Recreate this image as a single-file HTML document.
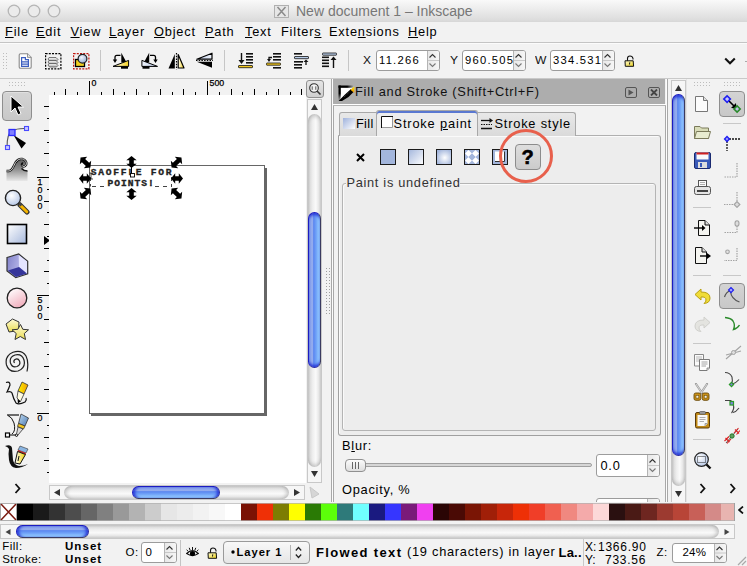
<!DOCTYPE html><html><head><meta charset="utf-8"><style>
html,body{margin:0;padding:0;}
body{width:747px;height:566px;position:relative;overflow:hidden;background:#f2f2f2;font-family:"Liberation Sans",sans-serif;}
.t{position:absolute;white-space:nowrap;line-height:1;}
div{box-sizing:border-box;}
u{text-decoration:underline;text-underline-offset:1px;}
</style></head><body>
<div style="position:absolute;left:0px;top:0px;width:747px;height:21px;background:linear-gradient(#f9f9f9,#e0e0e0 85%,#dadada);"></div>
<div style="position:absolute;left:0px;top:21px;width:747px;height:1px;background:#d8d8d8;"></div>
<svg style="position:absolute;left:7px;top:4px;" width="14" height="14" viewBox="0 0 14 14"><circle cx="7" cy="7" r="5.8" fill="#ebebeb" stroke="#b5b5b5" stroke-width="1.3"/></svg>
<svg style="position:absolute;left:27px;top:4px;" width="14" height="14" viewBox="0 0 14 14"><circle cx="7" cy="7" r="5.8" fill="#ebebeb" stroke="#b5b5b5" stroke-width="1.3"/></svg>
<svg style="position:absolute;left:47px;top:4px;" width="14" height="14" viewBox="0 0 14 14"><circle cx="7" cy="7" r="5.8" fill="#ebebeb" stroke="#b5b5b5" stroke-width="1.3"/></svg>
<svg style="position:absolute;left:274px;top:5px;" width="15" height="13" viewBox="0 0 15 13"><rect x="0.5" y="0.5" width="14" height="12" fill="#e6e6e6" stroke="#b0b0b0"/><path d="M3.5 2 L11.5 11 M11.5 2 L3.5 11" stroke="#8a8a8a" stroke-width="1.5"/></svg>
<div class="t" style="left:296px;top:4px;font-size:14px;color:#777;font-weight:400;">New document 1 – Inkscape</div>
<div style="position:absolute;left:0px;top:22px;width:747px;height:20px;background:#f2f2f2;"></div>
<div style="position:absolute;left:0px;top:42px;width:747px;height:1px;background:#c4c4c4;"></div>
<div style="position:absolute;left:0px;top:43px;width:747px;height:1px;background:#fbfbfb;"></div>
<div class="t" style="left:5px;top:25.9px;font-size:12.8px;color:#000;font-weight:400;letter-spacing:0.8px"><u>F</u>ile</div>
<div class="t" style="left:36px;top:25.9px;font-size:12.8px;color:#000;font-weight:400;letter-spacing:0.8px"><u>E</u>dit</div>
<div class="t" style="left:70.5px;top:25.9px;font-size:12.8px;color:#000;font-weight:400;letter-spacing:0.8px"><u>V</u>iew</div>
<div class="t" style="left:109px;top:25.9px;font-size:12.8px;color:#000;font-weight:400;letter-spacing:0.8px"><u>L</u>ayer</div>
<div class="t" style="left:154px;top:25.9px;font-size:12.8px;color:#000;font-weight:400;letter-spacing:0.8px"><u>O</u>bject</div>
<div class="t" style="left:205px;top:25.9px;font-size:12.8px;color:#000;font-weight:400;letter-spacing:0.8px"><u>P</u>ath</div>
<div class="t" style="left:245px;top:25.9px;font-size:12.8px;color:#000;font-weight:400;letter-spacing:0.8px"><u>T</u>ext</div>
<div class="t" style="left:281px;top:25.9px;font-size:12.8px;color:#000;font-weight:400;letter-spacing:0.8px">Filter<u>s</u></div>
<div class="t" style="left:329px;top:25.9px;font-size:12.8px;color:#000;font-weight:400;letter-spacing:0.8px">Exte<u>n</u>sions</div>
<div class="t" style="left:408px;top:25.9px;font-size:12.8px;color:#000;font-weight:400;letter-spacing:0.8px"><u>H</u>elp</div>
<div style="position:absolute;left:0px;top:44px;width:747px;height:34px;background:#f2f2f2;"></div>
<div style="position:absolute;left:0px;top:78px;width:747px;height:1px;background:#c9c9c9;"></div>
<svg style="position:absolute;left:3px;top:53px;" width="6" height="18" viewBox="0 0 6 18"><rect x="0" y="0" width="1" height="1" fill="#bdbdbd"/><rect x="0" y="3" width="1" height="1" fill="#bdbdbd"/><rect x="0" y="6" width="1" height="1" fill="#bdbdbd"/><rect x="0" y="9" width="1" height="1" fill="#bdbdbd"/><rect x="0" y="12" width="1" height="1" fill="#bdbdbd"/><rect x="0" y="15" width="1" height="1" fill="#bdbdbd"/><rect x="3" y="0" width="1" height="1" fill="#bdbdbd"/><rect x="3" y="3" width="1" height="1" fill="#bdbdbd"/><rect x="3" y="6" width="1" height="1" fill="#bdbdbd"/><rect x="3" y="9" width="1" height="1" fill="#bdbdbd"/><rect x="3" y="12" width="1" height="1" fill="#bdbdbd"/><rect x="3" y="15" width="1" height="1" fill="#bdbdbd"/></svg>
<svg style="position:absolute;left:18px;top:53px;" width="14" height="16" viewBox="0 0 14 16"><path d="M1.2 2 Q1.2 0.7 2.5 0.7 H9.5 L13.2 4.4 V14 Q13.2 15.3 11.9 15.3 H2.5 Q1.2 15.3 1.2 14 Z" fill="#fdfdfd" stroke="#8a8a8a" stroke-width="1.1"/><path d="M9.5 0.7 V4.4 H13.2" fill="#e6e6e6" stroke="#8a8a8a" stroke-width="0.9"/><path d="M3.6 4.6 H7.4 V6.6 H10.4 V13.4 H3.6 Z" fill="#fff" stroke="#3d5fc0" stroke-width="1.2"/><path d="M3.6 8.9 H10.4 M3.6 11.2 H10.4" stroke="#3d5fc0" stroke-width="1.2"/></svg>
<svg style="position:absolute;left:45px;top:53px;" width="17" height="17" viewBox="0 0 17 17"><defs><linearGradient id="lyr" x1="0" y1="0" x2="0" y2="1"><stop offset="0" stop-color="#fafafa"/><stop offset="1" stop-color="#aaa"/></linearGradient></defs><rect x="0.6" y="0.6" width="15.3" height="15.3" fill="none" stroke="#000" stroke-width="1.2" stroke-dasharray="2,1.2"/><path d="M4 4.5 H11 L13 6.5 L11.5 8 H4.5 L3 6Z" fill="url(#lyr)" stroke="#555" stroke-width="0.8"/><path d="M4 7.5 H11 L13 9.5 L11.5 11 H4.5 L3 9Z" fill="url(#lyr)" stroke="#555" stroke-width="0.8"/><path d="M4 10.5 H11 L13 12.5 L11.5 14 H4.5 L3 12Z" fill="url(#lyr)" stroke="#555" stroke-width="0.8"/></svg>
<svg style="position:absolute;left:73px;top:53px;" width="17" height="17" viewBox="0 0 17 17"><defs><radialGradient id="mg" cx="0.4" cy="0.35" r="0.7"><stop offset="0" stop-color="#f4f8ff"/><stop offset="1" stop-color="#90a8d0"/></radialGradient></defs><rect x="0.6" y="0.6" width="15.3" height="15.3" fill="none" stroke="#c01810" stroke-width="1.2" stroke-dasharray="2,1.2"/><rect x="2.5" y="6.5" width="9" height="7" fill="#f2d020" stroke="#000" stroke-width="1.3"/><circle cx="9.5" cy="5.8" r="4.4" fill="url(#mg)" stroke="#222" stroke-width="1.2"/></svg>
<div style="position:absolute;left:100px;top:50px;width:1px;height:21px;background:#c6c6c6;"></div>
<svg style="position:absolute;left:112px;top:52px;" width="19" height="18" viewBox="0 0 19 18"><defs><linearGradient id="yw" x1="0" y1="0" x2="1" y2="0"><stop offset="0" stop-color="#fffef0"/><stop offset="1" stop-color="#f4d020"/></linearGradient><linearGradient id="bw" x1="0" y1="0" x2="1" y2="0"><stop offset="0" stop-color="#b8c8e8"/><stop offset="1" stop-color="#eef2fa"/></linearGradient></defs><path d="M9.3 0.8 L14.2 9.8 L9.3 10.5 Z" fill="#000"/><path d="M8.5 3.3 H4.8 Q3 3.3 3 5.2 V8" fill="none" stroke="#000" stroke-width="1.3"/><path d="M0.8 7.6 L3 11 L5.2 7.6 Z" fill="#000"/><path d="M1 14.4 L16.6 8.4 V14.4 Z" fill="url(#yw)" stroke="#000" stroke-width="1" stroke-linejoin="round"/><rect x="9" y="14.4" width="7" height="2.3" fill="#000"/></svg>
<svg style="position:absolute;left:140px;top:52px;" width="19" height="18" viewBox="0 0 19 18"><g transform="translate(18.5 0) scale(-1 1)"><path d="M9.3 0.8 L14.2 9.8 L9.3 10.5 Z" fill="#000"/><path d="M8.5 3.3 H4.8 Q3 3.3 3 5.2 V8" fill="none" stroke="#000" stroke-width="1.3"/><path d="M0.8 7.6 L3 11 L5.2 7.6 Z" fill="#000"/><path d="M1 14.4 L16.6 8.4 V14.4 Z" fill="url(#bw)" stroke="#000" stroke-width="1" stroke-linejoin="round"/><rect x="9" y="14.4" width="7" height="2.3" fill="#000"/></g></svg>
<svg style="position:absolute;left:168px;top:52px;" width="17" height="18" viewBox="0 0 17 18"><path d="M6.8 2 L0.5 16.5 H6.8 Z" fill="#000"/><path d="M10.2 2.5 L16 16 H10.2 Z" fill="url(#yw)" stroke="#000" stroke-width="1.2" stroke-linejoin="round"/><path d="M8.5 1 V17.5" stroke="#000" stroke-width="1.2" stroke-dasharray="1.5,1.2"/></svg>
<svg style="position:absolute;left:196px;top:52px;" width="17" height="17" viewBox="0 0 17 17"><path d="M16 1.2 L0.8 7.2 H16 Z" fill="url(#bw)" stroke="#000" stroke-width="1.2" stroke-linejoin="round"/><path d="M16 15.8 L0.8 9.8 H16 Z" fill="#000"/><path d="M0 8.5 H17" stroke="#000" stroke-width="1.2" stroke-dasharray="1.5,1.2"/></svg>
<div style="position:absolute;left:224px;top:50px;width:1px;height:21px;background:#c6c6c6;"></div>
<svg style="position:absolute;left:237px;top:52px;" width="17" height="17" viewBox="0 0 17 17"><rect x="9" y="1" width="7" height="1.6" fill="#111"/><rect x="9" y="4" width="7" height="1.6" fill="#111"/><rect x="9" y="7" width="7" height="1.6" fill="#111"/><rect x="9" y="10" width="7" height="1.6" fill="#111"/><path d="M4.5 1 V10" stroke="#111" stroke-width="1.4"/><path d="M1.5 8 L4.5 12 L7.5 8Z" fill="#111"/><rect x="1.5" y="13.5" width="14" height="2.2" rx="0.5" fill="#f2c81e" stroke="#111" stroke-width="0.8"/></svg>
<svg style="position:absolute;left:265px;top:52px;" width="17" height="17" viewBox="0 0 17 17"><rect x="8" y="1" width="8" height="1.6" fill="#111"/><rect x="8" y="4" width="8" height="1.6" fill="#111"/><rect x="8" y="7" width="8" height="1.6" fill="#111"/><rect x="8" y="15" width="8" height="1.6" fill="#111"/><path d="M7 5.5 H4 V8" fill="none" stroke="#111" stroke-width="1.3"/><path d="M2 7 L4 10 L6 7Z" fill="#111"/><rect x="1.5" y="11" width="14" height="2.2" rx="0.5" fill="#f2c81e" stroke="#111" stroke-width="0.8"/></svg>
<svg style="position:absolute;left:293px;top:52px;" width="17" height="17" viewBox="0 0 17 17"><rect x="1" y="1" width="8" height="1.6" fill="#111"/><rect x="1" y="12" width="8" height="1.6" fill="#111"/><rect x="1" y="15" width="8" height="1.6" fill="#111"/><rect x="1" y="9" width="9" height="1.6" fill="#111"/><rect x="1.5" y="4.5" width="14" height="2.2" rx="0.5" fill="#b8cce8" stroke="#111" stroke-width="0.8"/><path d="M13 9 V13" stroke="#111" stroke-width="1.3"/><path d="M10.5 10 L13 7.5 L15.5 10Z" fill="#111"/></svg>
<svg style="position:absolute;left:321px;top:52px;" width="17" height="17" viewBox="0 0 17 17"><rect x="1.5" y="1" width="14" height="2.2" rx="0.5" fill="#b8cce8" stroke="#111" stroke-width="0.8"/><rect x="1" y="4.5" width="7" height="1.6" fill="#111"/><rect x="1" y="7.5" width="7" height="1.6" fill="#111"/><rect x="1" y="10.5" width="7" height="1.6" fill="#111"/><rect x="1" y="13.5" width="7" height="1.6" fill="#111"/><path d="M12.5 6 V16" stroke="#111" stroke-width="1.4"/><path d="M9.5 8 L12.5 4.5 L15.5 8Z" fill="#111"/></svg>
<div style="position:absolute;left:348px;top:50px;width:1px;height:21px;background:#c6c6c6;"></div>
<div class="t" style="left:362.5px;top:54.5px;font-size:11.5px;color:#111;font-weight:400;transform:scaleX(1.05);transform-origin:left">X</div>
<div style="position:absolute;left:376px;top:50px;width:64px;height:21px;border:1px solid #9c9c9c;border-radius:3px;background:#fff;overflow:hidden"><div style="position:absolute;right:0;top:0;width:12px;height:100%;background:linear-gradient(90deg,#e8e8e8,#f6f6f6);border-left:1px solid #b4b4b4"></div><svg style="position:absolute;right:0;top:0" width="12" height="19" viewBox="0 0 12 19"><path d="M2.5 6.5 L5.5 3.5 L8.5 6.5" fill="none" stroke="#333" stroke-width="1.1"/><path d="M2.5 12.5 L5.5 15.5 L8.5 12.5" fill="none" stroke="#777" stroke-width="1.1"/><path d="M1 9.5 H12" stroke="#c8c8c8"/></svg></div>
<div class="t" style="left:379px;top:54.5px;font-size:11.2px;color:#000;font-weight:400;letter-spacing:1.25px">11.266</div>
<div class="t" style="left:449.5px;top:54.5px;font-size:11.5px;color:#111;font-weight:400;transform:scaleX(1.05);transform-origin:left">Y</div>
<div style="position:absolute;left:462px;top:50px;width:64px;height:21px;border:1px solid #9c9c9c;border-radius:3px;background:#fff;overflow:hidden"><div style="position:absolute;right:0;top:0;width:12px;height:100%;background:linear-gradient(90deg,#e8e8e8,#f6f6f6);border-left:1px solid #b4b4b4"></div><svg style="position:absolute;right:0;top:0" width="12" height="19" viewBox="0 0 12 19"><path d="M2.5 6.5 L5.5 3.5 L8.5 6.5" fill="none" stroke="#333" stroke-width="1.1"/><path d="M2.5 12.5 L5.5 15.5 L8.5 12.5" fill="none" stroke="#777" stroke-width="1.1"/><path d="M1 9.5 H12" stroke="#c8c8c8"/></svg></div>
<div class="t" style="left:465px;top:54.5px;font-size:11.2px;color:#000;font-weight:400;letter-spacing:1.25px">960.505</div>
<div class="t" style="left:535px;top:54.5px;font-size:11.5px;color:#111;font-weight:400;transform:scaleX(1.05);transform-origin:left">W</div>
<div style="position:absolute;left:550px;top:50px;width:65px;height:21px;border:1px solid #9c9c9c;border-radius:3px;background:#fff;overflow:hidden"><div style="position:absolute;right:0;top:0;width:12px;height:100%;background:linear-gradient(90deg,#e8e8e8,#f6f6f6);border-left:1px solid #b4b4b4"></div><svg style="position:absolute;right:0;top:0" width="12" height="19" viewBox="0 0 12 19"><path d="M2.5 6.5 L5.5 3.5 L8.5 6.5" fill="none" stroke="#333" stroke-width="1.1"/><path d="M2.5 12.5 L5.5 15.5 L8.5 12.5" fill="none" stroke="#777" stroke-width="1.1"/><path d="M1 9.5 H12" stroke="#c8c8c8"/></svg></div>
<div class="t" style="left:553px;top:54.5px;font-size:11.2px;color:#000;font-weight:400;letter-spacing:1.25px">334.531</div>
<svg style="position:absolute;left:624px;top:55px;" width="11" height="12" viewBox="0 0 11 12"><defs><linearGradient id="lk2" x1="0" y1="0" x2="1" y2="1"><stop offset="0" stop-color="#fffbd0"/><stop offset="1" stop-color="#e8d020"/></linearGradient></defs><path d="M3.5 6 V3.5 Q3.5 1 6 1 Q8.5 1 9 3.5 V4.5" fill="none" stroke="#111" stroke-width="1.1"/><path d="M1 5.8 H9.2 L9.6 11.3 H1.3 Z" fill="url(#lk2)" stroke="#111" stroke-width="1"/><path d="M5 7.5 L6.3 7.5 L5.9 9.8 L5.3 9.8 Z" fill="#111"/></svg>
<svg style="position:absolute;left:724px;top:57px;" width="12" height="8" viewBox="0 0 12 8"><path d="M1.2 1.5 L6 6.2 L10.8 1.5" fill="none" stroke="#111" stroke-width="2.1"/></svg>
<div style="position:absolute;left:745px;top:61px;width:2px;height:1px;background:#aaa;"></div>
<svg style="position:absolute;left:9px;top:82px;" width="18" height="6" viewBox="0 0 18 6"><rect x="0" y="0" width="1" height="1" fill="#bdbdbd"/><rect x="0" y="3" width="1" height="1" fill="#bdbdbd"/><rect x="3" y="0" width="1" height="1" fill="#bdbdbd"/><rect x="3" y="3" width="1" height="1" fill="#bdbdbd"/><rect x="6" y="0" width="1" height="1" fill="#bdbdbd"/><rect x="6" y="3" width="1" height="1" fill="#bdbdbd"/><rect x="9" y="0" width="1" height="1" fill="#bdbdbd"/><rect x="9" y="3" width="1" height="1" fill="#bdbdbd"/><rect x="12" y="0" width="1" height="1" fill="#bdbdbd"/><rect x="12" y="3" width="1" height="1" fill="#bdbdbd"/><rect x="15" y="0" width="1" height="1" fill="#bdbdbd"/><rect x="15" y="3" width="1" height="1" fill="#bdbdbd"/></svg>
<div style="position:absolute;left:2px;top:91px;width:30px;height:30px;border:1px solid #8e8e8e;border-radius:4px;background:linear-gradient(#d4d4d4,#c8c8c8);box-shadow:inset 0 1px 0 #e0e0e0;"></div>
<svg style="position:absolute;left:9px;top:95px;" width="16" height="22" viewBox="0 0 16 22"><path d="M2 1 V17 L6 13 L9 20 L12 18.5 L9 12 L14.5 12 Z" fill="#000" stroke="#fff" stroke-width="1" stroke-linejoin="round"/></svg>
<svg style="position:absolute;left:4px;top:125px;" width="26" height="26" viewBox="0 0 26 26"><path d="M3 22.5 Q3 8 8 6 Q13 3 22.5 3.5" fill="none" stroke="#555" stroke-width="1.1"/><path d="M9.5 10 L17.5 23.5 L22 18Z" fill="#000"/><rect x="5" y="4.5" width="6" height="6" fill="#8080ff" stroke="#2a2aff" stroke-width="1.3"/><rect x="20.5" y="1.5" width="4" height="4" fill="#c8c8ff" stroke="#4a4aff" stroke-width="1.1"/><rect x="1.5" y="20.5" width="4" height="4" fill="#c8c8ff" stroke="#4a4aff" stroke-width="1.1"/></svg>
<svg style="position:absolute;left:6px;top:157px;" width="23" height="25" viewBox="0 0 23 25"><defs><linearGradient id="tw" x1="0" y1="0" x2="0" y2="1"><stop offset="0" stop-color="#5a5a5a"/><stop offset="0.45" stop-color="#8c8c8c"/><stop offset="1" stop-color="#e8e8e8"/></linearGradient></defs><path d="M0.5 14 H3 C6.5 13.5 7.5 9 9.5 5.5 C11.5 2.5 14 1.5 16.5 2 C19.5 2.8 21 5.5 20 8 C19 10 16.5 10 16 8.3 C15.6 7 16.3 6.3 17 6.6 L17 11 C18 13 19.5 14 21.5 14 V24 H0.5 Z" fill="url(#tw)"/><path d="M0.5 14 H3 C6.5 13.5 7.5 9 9.5 5.5 C11.5 2.5 14 1.5 16.5 2 C19.5 2.8 21 5.5 20 8 C19 10 16.5 10 16 8.3 C15.6 7 16.3 6.3 17 6.6" fill="none" stroke="#111" stroke-width="2.3"/><path d="M0.5 14 H3 C6.5 13.5 7.5 9 9.5 5.5 C11.5 2.5 14 1.5 16.5 2 C19.5 2.8 21 5.5 20 8 C19 10 16.5 10 16 8.3" fill="none" stroke="#fff" stroke-width="0.8"/><path d="M15.5 11.5 C17 13.2 19 14 21.5 14" fill="none" stroke="#111" stroke-width="1.3"/></svg>
<svg style="position:absolute;left:3px;top:188px;" width="27" height="27" viewBox="0 0 27 27"><defs><radialGradient id="zg" cx="0.4" cy="0.35" r="0.7"><stop offset="0" stop-color="#ffffff"/><stop offset="1" stop-color="#b4c6e6"/></radialGradient></defs><path d="M17 17 L24 24" stroke="#333" stroke-width="5" stroke-linecap="round"/><path d="M17.5 17.5 L23.8 23.8" stroke="#f4b400" stroke-width="3" stroke-linecap="round"/><path d="M16 15 L18.5 17.5" stroke="#444" stroke-width="3"/><circle cx="10" cy="10" r="7.6" fill="url(#zg)" stroke="#222" stroke-width="1.4"/></svg>
<svg style="position:absolute;left:6px;top:223px;" width="22" height="22" viewBox="0 0 22 22"><defs><linearGradient id="rg" x1="0" y1="0" x2="1" y2="1"><stop offset="0" stop-color="#ffffff"/><stop offset="1" stop-color="#a6b8dc"/></linearGradient></defs><rect x="1.5" y="1.5" width="19" height="19" fill="url(#rg)" stroke="#000" stroke-width="1.6"/></svg>
<svg style="position:absolute;left:6px;top:253px;" width="23" height="26" viewBox="0 0 23 26"><defs><linearGradient id="bl" x1="0" y1="0" x2="1" y2="0.3"><stop offset="0" stop-color="#8080c8"/><stop offset="1" stop-color="#c8c8f4"/></linearGradient></defs><path d="M1 4.5 L12.7 1 L21.7 8.3 V20.8 L9.8 24.7 L1 18 Z" fill="url(#bl)" stroke="#333" stroke-width="1.2"/><path d="M12.7 2 L21 8.5 V20.5 L13 14 Z" fill="#e4e4ff"/><path d="M13 14 L21 20.5 L10 24 L2 17.5 Z" fill="#35359a"/></svg>
<svg style="position:absolute;left:6px;top:287px;" width="23" height="23" viewBox="0 0 23 23"><defs><linearGradient id="cg" x1="0.2" y1="0" x2="0.8" y2="1"><stop offset="0" stop-color="#ffffff"/><stop offset="1" stop-color="#f0a8b8"/></linearGradient></defs><circle cx="11" cy="11" r="9.8" fill="url(#cg)" stroke="#222" stroke-width="1.3"/></svg>
<svg style="position:absolute;left:5px;top:318px;" width="25" height="24" viewBox="0 0 25 24"><defs><linearGradient id="sg" x1="0" y1="0" x2="0" y2="1"><stop offset="0" stop-color="#fffbd8"/><stop offset="1" stop-color="#eadc50"/></linearGradient></defs><path d="M1 6 L7.5 1 L14 4 L13.5 12.5 L4 14 Z" fill="url(#sg)" stroke="#333" stroke-width="1"/><path d="M15.5 6.5 L17.8 11.3 L23.5 11.8 L19.3 15.5 L20.5 21.5 L15.3 18.5 L10 21.5 L11.2 15.5 L7 11.8 L12.8 11.3 Z" fill="url(#sg)" stroke="#333" stroke-width="1"/></svg>
<svg style="position:absolute;left:5px;top:350px;" width="24" height="24" viewBox="0 0 24 24"><path d="M9.5 13 Q8 11 10 9.5 Q13 8 14.5 11 Q16 15 12 16.5 Q7 18 5.5 13 Q4 7 10 5 Q17 3.5 19 10 Q21 18 13 21 Q4 23 1.5 15 Q-0.5 6 8 2.3 Q17 -0.5 21 6 Q24 12 22 21.5" fill="none" stroke="#222" stroke-width="1.2"/></svg>
<svg style="position:absolute;left:5px;top:381px;" width="24" height="25" viewBox="0 0 24 25"><defs><linearGradient id="pg" x1="0" y1="0" x2="1" y2="0"><stop offset="0" stop-color="#fff200"/><stop offset="1" stop-color="#f2a000"/></linearGradient></defs><path d="M1 1.5 Q5 0 5 4 Q4 7 2 11 Q6 10 7 12 Q8.5 18 11 22 Q14 24 20 21 Q22 19 21 17" fill="none" stroke="#111" stroke-width="1.2"/><path d="M17 1 L23 4 L19 13 L13 10 Z" fill="url(#pg)" stroke="#333" stroke-width="0.8"/><path d="M13 10 L19 13 L15.5 20.5 L12 17 Z" fill="#fffbe0" stroke="#333" stroke-width="0.8"/><path d="M12.5 18 L15.5 20.5 L13 22.5 Z" fill="#000"/></svg>
<svg style="position:absolute;left:4px;top:413px;" width="26" height="26" viewBox="0 0 26 26"><defs><linearGradient id="bg2" x1="0" y1="0" x2="1" y2="1"><stop offset="0" stop-color="#c0dcf4"/><stop offset="1" stop-color="#4a78b0"/></linearGradient></defs><path d="M3 2 H15" stroke="#111" stroke-width="1.2"/><path d="M4 2.5 Q8 4 10 10 Q12 18 8 21" fill="none" stroke="#111" stroke-width="1"/><rect x="1.5" y="20" width="4" height="4" fill="#fff" stroke="#000" stroke-width="1.2"/><path d="M5.5 22 H11" stroke="#000" stroke-width="1"/><circle cx="12.5" cy="22.2" r="1.2" fill="#fff" stroke="#000"/><path d="M17 1 L24.5 5 L21 13 L14.5 10.5 Z" fill="url(#bg2)" stroke="#333" stroke-width="0.8"/><path d="M14.5 10.5 L21 13 L19.5 16 L13.5 13.5 Z" fill="#f4c820" stroke="#333" stroke-width="0.8"/><path d="M14 14 L19 16 L14 22 L12.5 21 Z" fill="#ddd" stroke="#333" stroke-width="0.8"/></svg>
<svg style="position:absolute;left:4px;top:444px;" width="26" height="26" viewBox="0 0 26 26"><defs><linearGradient id="cl" x1="0" y1="0" x2="1" y2="0"><stop offset="0" stop-color="#fff"/><stop offset="1" stop-color="#f0d000"/></linearGradient></defs><path d="M1 2 Q7 0 8 4 Q8.5 10 9 16 Q10 21 15 22 Q20 22 24 20 Q18 24 12 24 Q6 23 5 16 Q4 10 5 5 Q4 3 1 2Z" fill="#111"/><path d="M16 2 L24 5 L22 9 L14 6 Z" fill="#8ab4e0" stroke="#333" stroke-width="0.6"/><path d="M14 6 L22 9 L21.5 10.5 L13.5 7.5Z" fill="#c82020"/><path d="M13.5 7.5 L21.5 10.5 L16 20 L11 19 Z" fill="url(#cl)" stroke="#111" stroke-width="1"/><path d="M15 12 L14 17" stroke="#111" stroke-width="1"/></svg>
<svg style="position:absolute;left:14px;top:483px;" width="7" height="11" viewBox="0 0 7 11"><path d="M1.5 1 L5.5 5.5 L1.5 10" fill="none" stroke="#111" stroke-width="1.8"/></svg>
<svg style="position:absolute;left:0px;top:0px;pointer-events:none" width="747" height="566" viewBox="0 0 747 566"><rect x="54" y="92" width="1" height="3" fill="#000"/><rect x="65" y="89" width="1" height="6" fill="#000"/><rect x="77" y="92" width="1" height="3" fill="#000"/><rect x="89" y="81" width="1" height="14" fill="#000"/><rect x="101" y="92" width="1" height="3" fill="#000"/><rect x="113" y="89" width="1" height="6" fill="#000"/><rect x="124" y="92" width="1" height="3" fill="#000"/><rect x="136" y="89" width="1" height="6" fill="#000"/><rect x="148" y="92" width="1" height="3" fill="#000"/><rect x="160" y="89" width="1" height="6" fill="#000"/><rect x="172" y="92" width="1" height="3" fill="#000"/><rect x="183" y="89" width="1" height="6" fill="#000"/><rect x="195" y="92" width="1" height="3" fill="#000"/><rect x="207" y="81" width="1" height="14" fill="#000"/><rect x="219" y="92" width="1" height="3" fill="#000"/><rect x="231" y="89" width="1" height="6" fill="#000"/><rect x="242" y="92" width="1" height="3" fill="#000"/><rect x="254" y="89" width="1" height="6" fill="#000"/><rect x="266" y="92" width="1" height="3" fill="#000"/><rect x="278" y="89" width="1" height="6" fill="#000"/><rect x="290" y="92" width="1" height="3" fill="#000"/><rect x="301" y="89" width="1" height="6" fill="#000"/></svg>
<div class="t" style="left:91.5px;top:79px;font-size:8.8px;color:#000;font-weight:400;-webkit-text-stroke:0.25px #000">0</div>
<div class="t" style="left:209.5px;top:79px;font-size:8.8px;color:#000;font-weight:400;-webkit-text-stroke:0.25px #000">500</div>
<svg style="position:absolute;left:0px;top:0px;pointer-events:none" width="747" height="566" viewBox="0 0 747 566"><rect x="44" y="106" width="5" height="1" fill="#000"/><rect x="47" y="118" width="2" height="1" fill="#000"/><rect x="44" y="130" width="5" height="1" fill="#000"/><rect x="47" y="142" width="2" height="1" fill="#000"/><rect x="44" y="153" width="5" height="1" fill="#000"/><rect x="47" y="165" width="2" height="1" fill="#000"/><rect x="37" y="177" width="12" height="1" fill="#000"/><rect x="47" y="189" width="2" height="1" fill="#000"/><rect x="44" y="201" width="5" height="1" fill="#000"/><rect x="47" y="212" width="2" height="1" fill="#000"/><rect x="44" y="224" width="5" height="1" fill="#000"/><rect x="47" y="236" width="2" height="1" fill="#000"/><rect x="44" y="248" width="5" height="1" fill="#000"/><rect x="47" y="260" width="2" height="1" fill="#000"/><rect x="44" y="271" width="5" height="1" fill="#000"/><rect x="47" y="283" width="2" height="1" fill="#000"/><rect x="37" y="295" width="12" height="1" fill="#000"/><rect x="47" y="307" width="2" height="1" fill="#000"/><rect x="44" y="319" width="5" height="1" fill="#000"/><rect x="47" y="330" width="2" height="1" fill="#000"/><rect x="44" y="342" width="5" height="1" fill="#000"/><rect x="47" y="354" width="2" height="1" fill="#000"/><rect x="44" y="366" width="5" height="1" fill="#000"/><rect x="47" y="378" width="2" height="1" fill="#000"/><rect x="44" y="389" width="5" height="1" fill="#000"/><rect x="47" y="401" width="2" height="1" fill="#000"/><rect x="37" y="413" width="12" height="1" fill="#000"/><rect x="47" y="425" width="2" height="1" fill="#000"/><rect x="44" y="437" width="5" height="1" fill="#000"/><rect x="47" y="448" width="2" height="1" fill="#000"/><rect x="44" y="460" width="5" height="1" fill="#000"/><rect x="47" y="472" width="2" height="1" fill="#000"/></svg>
<div class="t" style="left:37.5px;top:178px;font-size:8.8px;color:#000;font-weight:400;-webkit-text-stroke:0.25px #000">1</div>
<div class="t" style="left:37.5px;top:186px;font-size:8.8px;color:#000;font-weight:400;-webkit-text-stroke:0.25px #000">0</div>
<div class="t" style="left:37.5px;top:194px;font-size:8.8px;color:#000;font-weight:400;-webkit-text-stroke:0.25px #000">0</div>
<div class="t" style="left:37.5px;top:202px;font-size:8.8px;color:#000;font-weight:400;-webkit-text-stroke:0.25px #000">0</div>
<div class="t" style="left:37.5px;top:296px;font-size:8.8px;color:#000;font-weight:400;-webkit-text-stroke:0.25px #000">5</div>
<div class="t" style="left:37.5px;top:304px;font-size:8.8px;color:#000;font-weight:400;-webkit-text-stroke:0.25px #000">0</div>
<div class="t" style="left:37.5px;top:312px;font-size:8.8px;color:#000;font-weight:400;-webkit-text-stroke:0.25px #000">0</div>
<div class="t" style="left:37.5px;top:414px;font-size:8.8px;color:#000;font-weight:400;-webkit-text-stroke:0.25px #000">0</div>
<svg style="position:absolute;left:44px;top:236px;" width="6" height="9" viewBox="0 0 6 9"><path d="M0 0 L6 4.5 L0 9Z" fill="#000"/></svg>
<div style="position:absolute;left:49px;top:95px;width:257px;height:388px;background:#fff;"></div>
<div style="position:absolute;left:91px;top:168px;width:176px;height:248px;background:#666;"></div>
<div style="position:absolute;left:89px;top:165px;width:176px;height:249px;background:#fff;border:1px solid #666;"></div>
<div class="t" style="left:90.8px;top:167.6px;font-size:9.6px;color:#222;font-weight:700;font-family:'Liberation Mono',monospace;letter-spacing:1.75px;-webkit-text-stroke:0.35px #222;">SAOFFLE FOR</div>
<div class="t" style="left:107.5px;top:179.2px;font-size:9.6px;color:#222;font-weight:700;font-family:'Liberation Mono',monospace;letter-spacing:1.0px;-webkit-text-stroke:0.35px #222;">POINTS!</div>
<svg style="position:absolute;left:89px;top:165px;" width="85" height="25" viewBox="0 0 85 25"><path d="M3 21.5 H18 M66 21.5 H83" stroke="#444" stroke-dasharray="4,4" stroke-width="1"/><path d="M1.5 12 V21.5" stroke="#444" stroke-dasharray="4,3"/><path d="M82.5 12 V21.5" stroke="#444" stroke-dasharray="4,3"/><path d="M0.5 8 H4 M0.5 14 H4 M2 8 V14" stroke="#222" stroke-width="0.8"/></svg>
<svg style="position:absolute;left:126px;top:156px;" width="11" height="12" viewBox="0 0 11 12"><g transform="rotate(0 5.5 6.0)"><path d="M5.5 0.0 L10.7 4.2 L7.8 4.2 L7.8 7.8 L10.7 7.8 L5.5 12.0 L0.2999999999999998 7.8 L3.2 7.8 L3.2 4.2 L0.2999999999999998 4.2 Z" fill="#000"/></g></svg>
<svg style="position:absolute;left:126px;top:188px;" width="11" height="12" viewBox="0 0 11 12"><g transform="rotate(0 5.5 6.0)"><path d="M5.5 0.0 L10.7 4.2 L7.8 4.2 L7.8 7.8 L10.7 7.8 L5.5 12.0 L0.2999999999999998 7.8 L3.2 7.8 L3.2 4.2 L0.2999999999999998 4.2 Z" fill="#000"/></g></svg>
<svg style="position:absolute;left:79px;top:173px;" width="12" height="11" viewBox="0 0 12 11"><g transform="rotate(90 6.0 5.5)"><path d="M6.0 -0.5 L11.2 3.7 L8.3 3.7 L8.3 7.3 L11.2 7.3 L6.0 11.5 L0.7999999999999998 7.3 L3.7 7.3 L3.7 3.7 L0.7999999999999998 3.7 Z" fill="#000"/></g></svg>
<svg style="position:absolute;left:171px;top:173px;" width="12" height="11" viewBox="0 0 12 11"><g transform="rotate(90 6.0 5.5)"><path d="M6.0 -0.5 L11.2 3.7 L8.3 3.7 L8.3 7.3 L11.2 7.3 L6.0 11.5 L0.7999999999999998 7.3 L3.7 7.3 L3.7 3.7 L0.7999999999999998 3.7 Z" fill="#000"/></g></svg>
<svg style="position:absolute;left:79px;top:156px;" width="13" height="13" viewBox="0 0 13 13"><g transform="rotate(-45 6.5 6.5)"><path d="M6.5 -0.5 L11.7 3.7 L8.8 3.7 L8.8 9.3 L11.7 9.3 L6.5 13.5 L1.2999999999999998 9.3 L4.2 9.3 L4.2 3.7 L1.2999999999999998 3.7 Z" fill="#000"/></g></svg>
<svg style="position:absolute;left:170px;top:156px;" width="13" height="13" viewBox="0 0 13 13"><g transform="rotate(45 6.5 6.5)"><path d="M6.5 -0.5 L11.7 3.7 L8.8 3.7 L8.8 9.3 L11.7 9.3 L6.5 13.5 L1.2999999999999998 9.3 L4.2 9.3 L4.2 3.7 L1.2999999999999998 3.7 Z" fill="#000"/></g></svg>
<svg style="position:absolute;left:79px;top:187px;" width="13" height="13" viewBox="0 0 13 13"><g transform="rotate(45 6.5 6.5)"><path d="M6.5 -0.5 L11.7 3.7 L8.8 3.7 L8.8 9.3 L11.7 9.3 L6.5 13.5 L1.2999999999999998 9.3 L4.2 9.3 L4.2 3.7 L1.2999999999999998 3.7 Z" fill="#000"/></g></svg>
<svg style="position:absolute;left:170px;top:187px;" width="13" height="13" viewBox="0 0 13 13"><g transform="rotate(-45 6.5 6.5)"><path d="M6.5 -0.5 L11.7 3.7 L8.8 3.7 L8.8 9.3 L11.7 9.3 L6.5 13.5 L1.2999999999999998 9.3 L4.2 9.3 L4.2 3.7 L1.2999999999999998 3.7 Z" fill="#000"/></g></svg>
<svg style="position:absolute;left:128px;top:165px;" width="8" height="13" viewBox="0 0 8 13"><path d="M1 0.5 H6 M3.5 0.5 V9" stroke="#000" stroke-width="1"/><rect x="2.5" y="8.5" width="4" height="3.5" fill="#fff" stroke="#000" stroke-width="0.9"/></svg>
<div style="position:absolute;left:306px;top:80px;width:18px;height:18px;border:1px solid #909090;border-radius:3px;background:linear-gradient(#e6e6e6,#cfcfcf);"></div>
<svg style="position:absolute;left:308px;top:82px;" width="14" height="14" viewBox="0 0 14 14"><circle cx="6" cy="6" r="4.3" fill="#f4f4f4" stroke="#333" stroke-width="1.1"/><path d="M9 9 L12.5 12.5" stroke="#333" stroke-width="1.6"/><path d="M4.2 4.3 V7.8 M7.8 4.3 V7.8" stroke="#444" stroke-width="0.9"/><path d="M6 5.5 V5.6 M6 7 V7.1" stroke="#666" stroke-width="0.8"/></svg>
<div style="position:absolute;left:307px;top:99px;width:15px;height:384px;background:#f6f6f6;border:1px solid #c8c8c8;"></div>
<div style="position:absolute;left:308px;top:114px;width:13px;height:353px;border-radius:7px;background:linear-gradient(90deg,#d0d0d0,#eeeeee 35%,#fafafa 60%,#d8d8d8);box-shadow:inset 0 4px 4px -2px rgba(0,0,0,0.22),inset 0 -4px 4px -2px rgba(0,0,0,0.22);"></div>
<div style="position:absolute;left:308px;top:212px;width:13px;height:156px;border-radius:6.5px;border:1px solid;border-color:#1c1cc0 #3a3a60 #2a2aa0 #1c1cc0;background:linear-gradient(90deg,#8aa4ec 0%,#94acee 35%,#5a86f0 42%,#78acfa 72%,#a4dcff 100%);box-shadow:inset 0 3px 3px -1px #2a3ad8,inset 0 -3px 3px -1px #2a3ad8;"></div>
<svg style="position:absolute;left:311.0px;top:104px;" width="7" height="6" viewBox="0 0 7 6"><path d="M3.5 0 L7 6 L0 6Z" fill="#333"/></svg>
<svg style="position:absolute;left:311.0px;top:471px;" width="7" height="6" viewBox="0 0 7 6"><path d="M0 0 L7 0 L3.5 6Z" fill="#333"/></svg>
<div style="position:absolute;left:49px;top:485px;width:256px;height:15px;background:#f6f6f6;border:1px solid #c8c8c8;"></div>
<div style="position:absolute;left:64px;top:486px;width:225px;height:13px;border-radius:7px;background:linear-gradient(#d0d0d0,#eeeeee 35%,#fafafa 60%,#d8d8d8);box-shadow:inset 4px 0 4px -2px rgba(0,0,0,0.22),inset -4px 0 4px -2px rgba(0,0,0,0.22);"></div>
<div style="position:absolute;left:132px;top:486px;width:88px;height:13px;border-radius:6.5px;border:1px solid;border-color:#1c1cc0 #2a2aa0 #3a3a60 #1c1cc0;background:linear-gradient(#8aa4ec 0%,#94acee 35%,#5a86f0 42%,#78acfa 72%,#a4dcff 100%);box-shadow:inset 3px 0 3px -1px #2a3ad8,inset -3px 0 3px -1px #2a3ad8;"></div>
<svg style="position:absolute;left:54px;top:489.0px;" width="6" height="7" viewBox="0 0 6 7"><path d="M0 3.5 L6 0 L6 7Z" fill="#333"/></svg>
<svg style="position:absolute;left:294px;top:489.0px;" width="6" height="7" viewBox="0 0 6 7"><path d="M6 3.5 L0 0 L0 7Z" fill="#333"/></svg>
<svg style="position:absolute;left:308px;top:486px;" width="12" height="13" viewBox="0 0 12 13"><path d="M2 1 L11 8 L4 12 Z" fill="#d6d6d6" stroke="#c8c8c8"/></svg>
<svg style="position:absolute;left:326px;top:268px;" width="6" height="48" viewBox="0 0 6 48"><rect x="0" y="0" width="1" height="1" fill="#a0a0a0"/><rect x="0" y="3" width="1" height="1" fill="#a0a0a0"/><rect x="0" y="6" width="1" height="1" fill="#a0a0a0"/><rect x="0" y="9" width="1" height="1" fill="#a0a0a0"/><rect x="0" y="12" width="1" height="1" fill="#a0a0a0"/><rect x="0" y="15" width="1" height="1" fill="#a0a0a0"/><rect x="0" y="18" width="1" height="1" fill="#a0a0a0"/><rect x="0" y="21" width="1" height="1" fill="#a0a0a0"/><rect x="0" y="24" width="1" height="1" fill="#a0a0a0"/><rect x="0" y="27" width="1" height="1" fill="#a0a0a0"/><rect x="0" y="30" width="1" height="1" fill="#a0a0a0"/><rect x="0" y="33" width="1" height="1" fill="#a0a0a0"/><rect x="0" y="36" width="1" height="1" fill="#a0a0a0"/><rect x="0" y="39" width="1" height="1" fill="#a0a0a0"/><rect x="0" y="42" width="1" height="1" fill="#a0a0a0"/><rect x="0" y="45" width="1" height="1" fill="#a0a0a0"/><rect x="3" y="0" width="1" height="1" fill="#a0a0a0"/><rect x="3" y="3" width="1" height="1" fill="#a0a0a0"/><rect x="3" y="6" width="1" height="1" fill="#a0a0a0"/><rect x="3" y="9" width="1" height="1" fill="#a0a0a0"/><rect x="3" y="12" width="1" height="1" fill="#a0a0a0"/><rect x="3" y="15" width="1" height="1" fill="#a0a0a0"/><rect x="3" y="18" width="1" height="1" fill="#a0a0a0"/><rect x="3" y="21" width="1" height="1" fill="#a0a0a0"/><rect x="3" y="24" width="1" height="1" fill="#a0a0a0"/><rect x="3" y="27" width="1" height="1" fill="#a0a0a0"/><rect x="3" y="30" width="1" height="1" fill="#a0a0a0"/><rect x="3" y="33" width="1" height="1" fill="#a0a0a0"/><rect x="3" y="36" width="1" height="1" fill="#a0a0a0"/><rect x="3" y="39" width="1" height="1" fill="#a0a0a0"/><rect x="3" y="42" width="1" height="1" fill="#a0a0a0"/><rect x="3" y="45" width="1" height="1" fill="#a0a0a0"/></svg>
<div style="position:absolute;left:331px;top:79px;width:1px;height:424px;background:#a8a8a8;"></div>
<div style="position:absolute;left:332px;top:79px;width:1px;height:424px;background:#fcfcfc;"></div>
<div style="position:absolute;left:333px;top:104px;width:1px;height:399px;background:#a8a8a8;"></div>
<div style="position:absolute;left:665px;top:104px;width:1px;height:399px;background:#a8a8a8;"></div>
<div style="position:absolute;left:666px;top:79px;width:1px;height:424px;background:#fcfcfc;"></div>
<div style="position:absolute;left:667px;top:79px;width:1px;height:424px;background:#a8a8a8;"></div>
<div style="position:absolute;left:334px;top:104px;width:331px;height:399px;background:#f2f2f2;"></div>
<div style="position:absolute;left:333px;top:79px;width:332px;height:25px;background:#adadad;"></div>
<div style="position:absolute;left:333px;top:104px;width:333px;height:1px;background:#ffffff;"></div>
<div style="position:absolute;left:333px;top:105px;width:333px;height:1px;background:#b4b4b4;"></div>
<svg style="position:absolute;left:337.5px;top:84.5px;" width="17" height="17" viewBox="0 0 17 17"><defs><linearGradient id="ht" x1="0" y1="0" x2="1" y2="0"><stop offset="0" stop-color="#000"/><stop offset="0.6" stop-color="#000"/><stop offset="1" stop-color="#000" stop-opacity="0.1"/></linearGradient><linearGradient id="hl" x1="0" y1="0" x2="0" y2="1"><stop offset="0" stop-color="#000"/><stop offset="0.55" stop-color="#000"/><stop offset="1" stop-color="#000" stop-opacity="0.1"/></linearGradient><linearGradient id="hy" x1="0" y1="0" x2="0" y2="1"><stop offset="0" stop-color="#ffe800"/><stop offset="1" stop-color="#f09000"/></linearGradient></defs><path d="M2 2.5 H15 L2 15 Z" fill="#fff"/><rect x="0.5" y="0.5" width="14.5" height="2.3" fill="url(#ht)"/><rect x="0.5" y="0.5" width="2.3" height="14.5" fill="url(#hl)"/><path d="M0.5 16 L4 16 L10.5 12 L15.5 7 L13 4 L7 9.5 Z" fill="#000"/><path d="M6 12 L12 6.5" stroke="#666" stroke-width="0.7" stroke-dasharray="1,1"/><path d="M12.5 4.8 L16.3 1.5 L16.3 8 Z" fill="url(#hy)"/></svg>
<div class="t" style="left:355px;top:85.9px;font-size:12.8px;color:#111;font-weight:400;letter-spacing:0.75px">Fill and Stroke (Shift+Ctrl+F)</div>
<div style="position:absolute;left:625px;top:87px;width:12px;height:11px;border:1.3px solid #555;border-radius:2px;"></div>
<svg style="position:absolute;left:627px;top:89px;" width="8" height="7" viewBox="0 0 8 7"><path d="M1.5 0.5 L6.5 3.5 L1.5 6.5Z" fill="#555"/></svg>
<div style="position:absolute;left:648px;top:87px;width:12px;height:11px;border:1.3px solid #555;border-radius:2px;"></div>
<svg style="position:absolute;left:650px;top:89px;" width="8" height="7" viewBox="0 0 8 7"><path d="M1 0.5 L7 6.5 M7 0.5 L1 6.5" stroke="#444" stroke-width="1.8"/></svg>
<div style="position:absolute;left:338px;top:135px;width:323px;height:301px;border:1px solid #a0a0a0;border-top-color:#b0b0b0;border-radius:0 3px 3px 3px;background:#ededed;box-shadow:inset 1px 1px 0 #fafafa;"></div>
<div style="position:absolute;left:339px;top:112px;width:38px;height:24px;border:1px solid #a8a8a8;border-bottom:none;border-radius:3px 0 0 0;background:linear-gradient(#e8e8e8,#dadada);"></div>
<svg style="position:absolute;left:343px;top:118px;" width="12" height="11" viewBox="0 0 12 11"><defs><linearGradient id="fg" x1="0" y1="0" x2="1" y2="1"><stop offset="0" stop-color="#9fb2dc"/><stop offset="1" stop-color="#ffffff"/></linearGradient></defs><rect x="0" y="0" width="12" height="11" fill="url(#fg)"/></svg>
<div class="t" style="left:356px;top:117.8px;font-size:12.8px;color:#000;font-weight:400;letter-spacing:0.3px">Fill</div>
<div style="position:absolute;left:477px;top:112px;width:99px;height:24px;border:1px solid #a8a8a8;border-bottom:none;border-radius:0 3px 0 0;background:linear-gradient(#e8e8e8,#dadada);"></div>
<svg style="position:absolute;left:480px;top:117px;" width="14" height="14" viewBox="0 0 14 14"><path d="M1 3.5 H10" stroke="#111" stroke-width="1.3"/><path d="M9.5 1 L13 3.5 L9.5 6 Z" fill="#111"/><path d="M1 7.5 H12" stroke="#111" stroke-width="1" stroke-dasharray="1.5,1"/><path d="M1 11.5 H12" stroke="#111" stroke-width="1.5"/></svg>
<div class="t" style="left:494.5px;top:117.6px;font-size:12.8px;color:#000;font-weight:400;letter-spacing:0.8px">Stroke style</div>
<div style="position:absolute;left:376px;top:110px;width:102px;height:26px;border:1px solid #a8a8a8;border-bottom:none;border-radius:3px 3px 0 0;background:#ededed;box-shadow:inset 0 2px 0 #5a78d0;"></div>
<svg style="position:absolute;left:381px;top:116px;" width="13" height="13" viewBox="0 0 13 13"><rect x="0" y="0" width="12" height="12" fill="#fff"/><path d="M0.5 12 V0.5 H12" stroke="#111" fill="none"/><path d="M11.5 1 V11.5 H1" stroke="#999" fill="none"/></svg>
<div class="t" style="left:393.5px;top:117.6px;font-size:12.8px;color:#000;font-weight:400;letter-spacing:0.85px">Stroke <u>p</u>aint</div>
<svg style="position:absolute;left:356px;top:153px;" width="9" height="9" viewBox="0 0 9 9"><path d="M1 1 L8 8 M8 1 L1 8" stroke="#000" stroke-width="2"/></svg>
<svg style="position:absolute;left:380px;top:149px;" width="16" height="16" viewBox="0 0 16 16"><rect x="0.5" y="0.5" width="15" height="15" fill="#a3b6dc" stroke="#1a1a1a"/></svg>
<svg style="position:absolute;left:408px;top:149px;" width="16" height="16" viewBox="0 0 16 16"><defs><linearGradient id="lg" x1="0" y1="0" x2="1" y2="1"><stop offset="0" stop-color="#a3b6dc"/><stop offset="1" stop-color="#fff"/></linearGradient></defs><rect x="0.5" y="0.5" width="15" height="15" fill="url(#lg)" stroke="#1a1a1a"/></svg>
<svg style="position:absolute;left:436px;top:149px;" width="16" height="16" viewBox="0 0 16 16"><defs><radialGradient id="rg2" cx="0.55" cy="0.55" r="0.6"><stop offset="0" stop-color="#fff"/><stop offset="1" stop-color="#a3b6dc"/></radialGradient></defs><rect x="0.5" y="0.5" width="15" height="15" fill="url(#rg2)" stroke="#1a1a1a"/></svg>
<svg style="position:absolute;left:464px;top:149px;" width="16" height="16" viewBox="0 0 16 16"><rect x="0.5" y="0.5" width="15" height="15" fill="#a3b6dc" stroke="#1a1a1a"/><path d="M4.5 1 L8 4.5 L4.5 8 L1 4.5Z M11.5 1 L15 4.5 L11.5 8 L8 4.5Z M4.5 8 L8 11.5 L4.5 15 L1 11.5Z M11.5 8 L15 11.5 L11.5 15 L8 11.5Z" fill="#fff"/><path d="M8 4.5 L11.5 8 L8 11.5 L4.5 8Z" fill="#a3b6dc"/></svg>
<svg style="position:absolute;left:492px;top:149px;" width="16" height="16" viewBox="0 0 16 16"><rect x="0.5" y="0.5" width="15" height="15" fill="#a3b6dc" stroke="#1a1a1a"/><rect x="3" y="2.5" width="9.5" height="10" fill="#fff"/><path d="M12.5 2.5 V12.5 H3" fill="none" stroke="#333" stroke-width="1"/></svg>
<div style="position:absolute;left:515px;top:144px;width:26px;height:26px;border:1px solid #8c8c8c;border-radius:4px;background:linear-gradient(#dedede,#cbcbcb);"></div>
<div class="t" style="left:521.5px;top:147px;font-size:20px;color:#000;font-weight:700;-webkit-text-stroke:0.6px #000">?</div>
<svg style="position:absolute;left:497px;top:127px;" width="58" height="58" viewBox="0 0 58 58"><circle cx="29" cy="29" r="25.5" fill="none" stroke="#e8604c" stroke-width="3"/></svg>
<div style="position:absolute;left:342px;top:183px;width:314px;height:248px;border:1px solid #b4b4b4;border-radius:3px;box-shadow:inset 1px 1px 0 #fafafa;"></div>
<div style="position:absolute;left:346px;top:178px;width:114px;height:10px;background:#ededed;"></div>
<div class="t" style="left:346.5px;top:177px;font-size:12.8px;color:#333;font-weight:400;letter-spacing:0.69px">Paint is undefined</div>
<div class="t" style="left:342px;top:440.2px;font-size:12.8px;color:#000;font-weight:400;letter-spacing:0.75px">B<u>l</u>ur:</div>
<div style="position:absolute;left:350px;top:463px;width:242px;height:4px;border:1px solid #a0a0a0;border-radius:2px;background:#d6d6d6;"></div>
<div style="position:absolute;left:345px;top:459px;width:21px;height:13px;border:1px solid #909090;border-radius:4px;background:linear-gradient(#fbfbfb,#dedede);"></div>
<svg style="position:absolute;left:351px;top:462px;" width="9" height="7" viewBox="0 0 9 7"><path d="M1.5 0 V7 M4.5 0 V7 M7.5 0 V7" stroke="#666" stroke-width="1"/></svg>
<div style="position:absolute;left:596px;top:454px;width:64px;height:23px;border:1px solid #9c9c9c;border-radius:3px;background:#fff;overflow:hidden"><div style="position:absolute;right:0;top:0;width:12px;height:100%;background:linear-gradient(90deg,#e8e8e8,#f6f6f6);border-left:1px solid #b4b4b4"></div><svg style="position:absolute;right:0;top:0" width="12" height="21" viewBox="0 0 12 21"><path d="M2.5 7.5 L5.5 4.5 L8.5 7.5" fill="none" stroke="#333" stroke-width="1.1"/><path d="M2.5 13.5 L5.5 16.5 L8.5 13.5" fill="none" stroke="#777" stroke-width="1.1"/><path d="M1 10.5 H12" stroke="#c8c8c8"/></svg></div>
<div class="t" style="left:600.5px;top:460px;font-size:12.8px;color:#000;font-weight:400;letter-spacing:0.75px">0.0</div>
<div class="t" style="left:342px;top:484.2px;font-size:12.8px;color:#000;font-weight:400;letter-spacing:0.75px">Opacity, %</div>
<div style="position:absolute;left:596px;top:498px;width:64px;height:23px;border:1px solid #9c9c9c;border-radius:3px;background:#fff;overflow:hidden"><div style="position:absolute;right:0;top:0;width:12px;height:100%;background:linear-gradient(90deg,#e8e8e8,#f6f6f6);border-left:1px solid #b4b4b4"></div><svg style="position:absolute;right:0;top:0" width="12" height="21" viewBox="0 0 12 21"><path d="M2.5 7.5 L5.5 4.5 L8.5 7.5" fill="none" stroke="#333" stroke-width="1.1"/><path d="M2.5 13.5 L5.5 16.5 L8.5 13.5" fill="none" stroke="#777" stroke-width="1.1"/><path d="M1 10.5 H12" stroke="#c8c8c8"/></svg></div>
<div class="t" style="left:601px;top:502.8px;font-size:14.4px;color:#000;font-weight:400;letter-spacing:0px"></div>
<div style="position:absolute;left:331px;top:502px;width:337px;height:1px;background:#a8a8a8;"></div>
<div style="position:absolute;left:671px;top:80px;width:15px;height:423px;background:#f6f6f6;border:1px solid #c8c8c8;"></div>
<div style="position:absolute;left:672px;top:95px;width:13px;height:391px;border-radius:7px;background:linear-gradient(90deg,#d0d0d0,#eeeeee 35%,#fafafa 60%,#d8d8d8);box-shadow:inset 0 4px 4px -2px rgba(0,0,0,0.22),inset 0 -4px 4px -2px rgba(0,0,0,0.22);"></div>
<div style="position:absolute;left:672px;top:94px;width:13px;height:362px;border-radius:6.5px;border:1px solid;border-color:#1c1cc0 #3a3a60 #2a2aa0 #1c1cc0;background:linear-gradient(90deg,#8aa4ec 0%,#94acee 35%,#5a86f0 42%,#78acfa 72%,#a4dcff 100%);box-shadow:inset 0 3px 3px -1px #2a3ad8,inset 0 -3px 3px -1px #2a3ad8;"></div>
<svg style="position:absolute;left:675.0px;top:85px;" width="7" height="6" viewBox="0 0 7 6"><path d="M3.5 0 L7 6 L0 6Z" fill="#333"/></svg>
<svg style="position:absolute;left:675.0px;top:491px;" width="7" height="6" viewBox="0 0 7 6"><path d="M0 0 L7 0 L3.5 6Z" fill="#333"/></svg>
<div style="position:absolute;left:686px;top:79px;width:1px;height:424px;background:#e4e4e4;"></div>
<svg style="position:absolute;left:694px;top:82px;" width="18" height="6" viewBox="0 0 18 6"><rect x="0" y="0" width="1" height="1" fill="#bdbdbd"/><rect x="0" y="3" width="1" height="1" fill="#bdbdbd"/><rect x="3" y="0" width="1" height="1" fill="#bdbdbd"/><rect x="3" y="3" width="1" height="1" fill="#bdbdbd"/><rect x="6" y="0" width="1" height="1" fill="#bdbdbd"/><rect x="6" y="3" width="1" height="1" fill="#bdbdbd"/><rect x="9" y="0" width="1" height="1" fill="#bdbdbd"/><rect x="9" y="3" width="1" height="1" fill="#bdbdbd"/><rect x="12" y="0" width="1" height="1" fill="#bdbdbd"/><rect x="12" y="3" width="1" height="1" fill="#bdbdbd"/><rect x="15" y="0" width="1" height="1" fill="#bdbdbd"/><rect x="15" y="3" width="1" height="1" fill="#bdbdbd"/></svg>
<svg style="position:absolute;left:724px;top:82px;" width="18" height="6" viewBox="0 0 18 6"><rect x="0" y="0" width="1" height="1" fill="#bdbdbd"/><rect x="0" y="3" width="1" height="1" fill="#bdbdbd"/><rect x="3" y="0" width="1" height="1" fill="#bdbdbd"/><rect x="3" y="3" width="1" height="1" fill="#bdbdbd"/><rect x="6" y="0" width="1" height="1" fill="#bdbdbd"/><rect x="6" y="3" width="1" height="1" fill="#bdbdbd"/><rect x="9" y="0" width="1" height="1" fill="#bdbdbd"/><rect x="9" y="3" width="1" height="1" fill="#bdbdbd"/><rect x="12" y="0" width="1" height="1" fill="#bdbdbd"/><rect x="12" y="3" width="1" height="1" fill="#bdbdbd"/><rect x="15" y="0" width="1" height="1" fill="#bdbdbd"/><rect x="15" y="3" width="1" height="1" fill="#bdbdbd"/></svg>
<svg style="position:absolute;left:694px;top:96px;" width="15" height="16" viewBox="0 0 15 16"><path d="M1.5 0.5 H9.5 L13.5 4.5 V15.5 H1.5 Z" fill="#fcfcfc" stroke="#777"/><path d="M9.5 0.5 V4.5 H13.5" fill="#e0e0e0" stroke="#777"/></svg>
<svg style="position:absolute;left:694px;top:125px;" width="17" height="14" viewBox="0 0 17 14"><path d="M0.5 1.5 H6 L7.5 3 H14.5 V13.5 H0.5 Z" fill="#d8dcb8" stroke="#7a7a5a"/><path d="M0.5 13.5 L2.5 6.5 H16.5 L14.5 13.5 Z" fill="#e8ecd0" stroke="#7a7a5a"/></svg>
<svg style="position:absolute;left:694px;top:152px;" width="17" height="17" viewBox="0 0 17 17"><rect x="0.5" y="0.5" width="16" height="16" rx="1.5" fill="#3a5ab8" stroke="#1a2a70"/><rect x="2.5" y="0.5" width="12" height="7" fill="#fafafa"/><rect x="2.5" y="0.5" width="12" height="2" fill="#d02020"/><rect x="4" y="10" width="9" height="6" fill="#ddd"/><rect x="6" y="11" width="2" height="4" fill="#3a5ab8"/></svg>
<svg style="position:absolute;left:694px;top:180px;" width="17" height="16" viewBox="0 0 17 16"><rect x="4.5" y="0.5" width="8" height="6" fill="#fafafa" stroke="#555"/><rect x="0.5" y="6.5" width="16" height="8" rx="2" fill="#e4e4e4" stroke="#555"/><rect x="3" y="10" width="11" height="2" fill="#444"/><path d="M6 2.5 H11 M6 4.5 H11" stroke="#999" stroke-width="0.8"/></svg>
<div style="position:absolute;left:693px;top:207px;width:18px;height:1px;background:#c8c8c8;"></div>
<svg style="position:absolute;left:694px;top:220px;" width="17" height="16" viewBox="0 0 17 16"><path d="M4.5 0.5 H11 L15.5 5 V15.5 H4.5 Z" fill="#f4f4f0" stroke="#111"/><path d="M11 0.5 V5 H15.5" fill="#ddd" stroke="#111"/><path d="M0 8 H9" stroke="#000" stroke-width="1.4"/><path d="M8 5 L11.5 8 L8 11Z" fill="#000"/></svg>
<svg style="position:absolute;left:694px;top:247px;" width="17" height="17" viewBox="0 0 17 17"><path d="M1.5 0.5 H8 L12.5 5 V16.5 H1.5 Z" fill="#f4f4f0" stroke="#111"/><path d="M8 0.5 V5 H12.5" fill="#ddd" stroke="#111"/><path d="M6 9 H14" stroke="#000" stroke-width="1.4"/><path d="M13 6 L17 9 L13 12Z" fill="#000"/></svg>
<div style="position:absolute;left:693px;top:275px;width:18px;height:1px;background:#c8c8c8;"></div>
<svg style="position:absolute;left:694px;top:288px;" width="17" height="16" viewBox="0 0 17 16"><path d="M7 1 L1 6.5 L7 12 V9 Q12 8.5 12 12 Q12 14 10 15.5 Q16 15 16 10 Q16 4 7 4 Z" fill="#f0dc38" stroke="#b8a010" stroke-width="1"/></svg>
<svg style="position:absolute;left:694px;top:316px;" width="17" height="16" viewBox="0 0 17 16"><path d="M10 1 L16 6.5 L10 12 V9 Q5 8.5 5 12 Q5 14 7 15.5 Q1 15 1 10 Q1 4 10 4 Z" fill="#e4e4e0" stroke="#d0d0cc" stroke-width="1"/></svg>
<div style="position:absolute;left:693px;top:343px;width:18px;height:1px;background:#c8c8c8;"></div>
<svg style="position:absolute;left:694px;top:354px;" width="17" height="18" viewBox="0 0 17 18"><path d="M0.5 0.5 H9.5 V12 H0.5Z" fill="#fafafa" stroke="#8a8a8a"/><path d="M2 3 H8 M2 5 H8 M2 7 H8" stroke="#aaa" stroke-width="0.8"/><path d="M5.5 5.5 H15.5 V14 L13 16.5 H5.5 Z" fill="#fdfdfd" stroke="#7a7a7a"/><path d="M13 16.5 V14 H15.5" fill="#ddd" stroke="#7a7a7a" stroke-width="0.8"/><path d="M7.5 8 H13.5 M7.5 10 H13.5 M7.5 12 H12" stroke="#999" stroke-width="0.9"/></svg>
<svg style="position:absolute;left:693px;top:383px;" width="17" height="18" viewBox="0 0 17 18"><path d="M3 1 L9 10 M14 1 L8 10" stroke="#999" stroke-width="2.2" stroke-linecap="round"/><path d="M3 1 L9 10 M14 1 L8 10" stroke="#d8d8d8" stroke-width="1"/><rect x="1" y="10" width="6.8" height="7.3" rx="1.8" fill="#c89018" stroke="#6a4a08" stroke-width="0.9"/><rect x="9.2" y="10" width="6.8" height="7.3" rx="1.8" fill="#c89018" stroke="#6a4a08" stroke-width="0.9"/><rect x="3" y="12.3" width="2.8" height="2.8" fill="#f4f0e0" stroke="#6a4a08" stroke-width="0.6"/><rect x="11.2" y="12.3" width="2.8" height="2.8" fill="#f4f0e0" stroke="#6a4a08" stroke-width="0.6"/></svg>
<svg style="position:absolute;left:695px;top:411px;" width="15" height="18" viewBox="0 0 15 18"><rect x="0.5" y="1.5" width="14" height="15.5" rx="1.5" fill="#c08a18" stroke="#5a3a08"/><path d="M2.5 4 H12.5 V12.5 L10 15 H2.5 Z" fill="#f8f8f8"/><path d="M10 15 V12.5 H12.5" fill="#ccc" stroke="#888" stroke-width="0.7"/><rect x="4.5" y="0.5" width="6" height="2.8" rx="1" fill="#999" stroke="#555" stroke-width="0.7"/><path d="M4.5 6.5 H10.5 M4.5 8.5 H10.5 M4.5 10.5 H9" stroke="#999" stroke-width="0.8"/></svg>
<div style="position:absolute;left:693px;top:439px;width:18px;height:1px;background:#c8c8c8;"></div>
<svg style="position:absolute;left:694px;top:452px;" width="18" height="18" viewBox="0 0 18 18"><defs><radialGradient id="zd" cx="0.4" cy="0.35" r="0.7"><stop offset="0" stop-color="#ffffff"/><stop offset="1" stop-color="#b4c6e6"/></radialGradient></defs><path d="M12 12 L16.5 16.5" stroke="#111" stroke-width="2.4"/><circle cx="7.5" cy="7.5" r="6.8" fill="url(#zd)" stroke="#222" stroke-width="1.2"/><rect x="3.5" y="4.5" width="8" height="6" fill="none" stroke="#222" stroke-dasharray="1,1" stroke-width="1"/></svg>
<svg style="position:absolute;left:699px;top:483px;" width="7" height="11" viewBox="0 0 7 11"><path d="M1.5 1 L5.5 5.5 L1.5 10" fill="none" stroke="#111" stroke-width="1.8"/></svg>
<div style="position:absolute;left:719px;top:91px;width:26px;height:26px;border:1px solid #8e8e8e;border-radius:4px;background:linear-gradient(#d4d4d4,#c8c8c8);"></div>
<svg style="position:absolute;left:720px;top:92px;" width="24" height="24" viewBox="0 0 24 24"><path d="M7.5 7.5 L14.5 14.5" stroke="#000" stroke-width="1.6"/><path d="M11 16 L16.5 16.5 L16 11Z" fill="#000"/><rect x="4.8" y="4.8" width="4.6" height="4.6" transform="rotate(45 7.1 7.1)" fill="#c8c8ff" stroke="#2020f0" stroke-width="1.6"/><rect x="14.9" y="14.9" width="4.4" height="4.4" transform="rotate(45 17.1 17.1)" fill="#c0c0e8" stroke="#2a8a2a" stroke-width="1.6"/></svg>
<div style="position:absolute;left:723px;top:123px;width:18px;height:1px;background:#c8c8c8;"></div>
<svg style="position:absolute;left:723px;top:135px;" width="18" height="17" viewBox="0 0 18 17"><path d="M6 4 H17" stroke="#111" stroke-dasharray="2,1" stroke-width="1.3"/><path d="M4 6 V16" stroke="#111" stroke-dasharray="2,1" stroke-width="1.3"/><rect x="2.3" y="2.3" width="3.4" height="3.4" transform="rotate(45 4 4)" fill="#a0a0ff" stroke="#2020f0" stroke-width="1.4"/></svg>
<svg style="position:absolute;left:723px;top:162px;" width="18" height="17" viewBox="0 0 18 17"><path d="M14 1 V15 H1" fill="none" stroke="#a4a4a4" stroke-dasharray="1.5,1" stroke-width="1.2"/></svg>
<svg style="position:absolute;left:723px;top:191px;" width="18" height="17" viewBox="0 0 18 17"><path d="M14 1 V10.5 M1 13.5 H11" fill="none" stroke="#a4a4a4" stroke-dasharray="1.5,1" stroke-width="1.2"/><rect x="12" y="11.5" width="4" height="4" transform="rotate(45 14 13.5)" fill="#ddd" stroke="#a4a4a4" stroke-width="1.2"/></svg>
<svg style="position:absolute;left:723px;top:219px;" width="18" height="16" viewBox="0 0 18 16"><path d="M14 7 V13.5 H1" fill="none" stroke="#a4a4a4" stroke-dasharray="1.5,1" stroke-width="1.2"/><ellipse cx="14" cy="4.5" rx="2" ry="2.7" fill="#ddd" stroke="#a4a4a4" stroke-width="1.1"/></svg>
<svg style="position:absolute;left:723px;top:247px;" width="18" height="15" viewBox="0 0 18 15"><path d="M14 1 V13.5 H1" fill="none" stroke="#a4a4a4" stroke-dasharray="1.5,1" stroke-width="1.2"/><circle cx="4.5" cy="4.8" r="1.8" fill="#e4e4e4" stroke="#a4a4a4" stroke-width="1.1"/></svg>
<div style="position:absolute;left:723px;top:275px;width:18px;height:1px;background:#c8c8c8;"></div>
<div style="position:absolute;left:719px;top:283px;width:26px;height:26px;border:1px solid #8e8e8e;border-radius:4px;background:linear-gradient(#d4d4d4,#c8c8c8);"></div>
<svg style="position:absolute;left:722px;top:286px;" width="20" height="20" viewBox="0 0 20 20"><path d="M2.5 11 Q4 6 8.5 4.5 M8.5 5 Q9 13 17.5 16" fill="none" stroke="#555" stroke-width="1.2"/><rect x="7.3" y="2.3" width="3.5" height="3.5" transform="rotate(45 9 4)" fill="#aaf" stroke="#2020f0" stroke-width="1.2"/></svg>
<svg style="position:absolute;left:724px;top:316px;" width="18" height="16" viewBox="0 0 18 16"><path d="M1 1.5 Q7 2 9 5 Q11.5 9 9.5 13.5 Q13.5 12.5 15.5 9" fill="none" stroke="#2a8a2a" stroke-width="1.4"/></svg>
<svg style="position:absolute;left:725px;top:345px;" width="17" height="15" viewBox="0 0 17 15"><path d="M1 14 L16 1 M1 10 L16 6" stroke="#a4a4a4" stroke-width="1.1"/><circle cx="8.5" cy="7.5" r="2" fill="#ddd" stroke="#a4a4a4"/></svg>
<svg style="position:absolute;left:724px;top:371px;" width="17" height="17" viewBox="0 0 17 17"><path d="M1 1.5 Q6 1.5 8 6 Q9 10 7.5 13.5 M8.5 13 Q12 12 15 8.5" fill="none" stroke="#444" stroke-width="1.1"/><rect x="6" y="12" width="3" height="3" transform="rotate(45 7.5 13.5)" fill="#8080e0" stroke="#2a9a2a" stroke-width="1.2"/></svg>
<svg style="position:absolute;left:724px;top:399px;" width="17" height="16" viewBox="0 0 17 16"><path d="M1 1.5 H7.5 M8 4 Q10.5 7 9.5 10 Q8.5 13 7.5 14 M9 13.5 Q12 13 15 9" fill="none" stroke="#444" stroke-width="1.1"/><rect x="6" y="2.5" width="3.5" height="3.5" fill="#8080e0" stroke="#2a9a2a" stroke-width="1.2"/></svg>
<svg style="position:absolute;left:724px;top:427px;" width="16" height="18" viewBox="0 0 16 18"><path d="M2 16 L14 2" stroke="#444" stroke-width="0.9"/><path d="M10 6 L14.5 1 M12.5 7.5 L16 3.5 M11 2.5 L15 6.5" stroke="#d82020" stroke-width="1.1"/><path d="M0.5 14 L5 9.5 M3 16.5 L7 12 M1.5 11 L5.5 15" stroke="#d82020" stroke-width="1.1"/><circle cx="8" cy="9" r="2.2" fill="#60a060" stroke="#207020" stroke-width="0.9"/></svg>
<svg style="position:absolute;left:729px;top:483px;" width="7" height="11" viewBox="0 0 7 11"><path d="M1.5 1 L5.5 5.5 L1.5 10" fill="none" stroke="#111" stroke-width="1.8"/></svg>
<div style="position:absolute;left:0px;top:502px;width:747px;height:20px;background:#f2f2f2;"></div>
<svg style="position:absolute;left:0px;top:503px;" width="735" height="18" viewBox="0 0 735 18"><rect x="0.5" y="0.5" width="16" height="17" fill="#fff" stroke="#aaa"/><path d="M1 1 L16 17 M16 1 L1 17" stroke="#7a1a10" stroke-width="1.5"/><rect x="17" y="0" width="16" height="18" fill="#000000"/><rect x="33" y="0" width="16" height="18" fill="#1a1a1a"/><rect x="49" y="0" width="16" height="18" fill="#333333"/><rect x="65" y="0" width="16" height="18" fill="#4d4d4d"/><rect x="81" y="0" width="16" height="18" fill="#666666"/><rect x="97" y="0" width="16" height="18" fill="#808080"/><rect x="113" y="0" width="16" height="18" fill="#999999"/><rect x="129" y="0" width="16" height="18" fill="#b3b3b3"/><rect x="145" y="0" width="16" height="18" fill="#cccccc"/><rect x="161" y="0" width="16" height="18" fill="#e6e6e6"/><rect x="177" y="0" width="16" height="18" fill="#ececec"/><rect x="193" y="0" width="16" height="18" fill="#f2f2f2"/><rect x="209" y="0" width="16" height="18" fill="#f8f8f8"/><rect x="225" y="0" width="16" height="18" fill="#ffffff"/><rect x="241" y="0" width="16" height="18" fill="#7a1204"/><rect x="257" y="0" width="16" height="18" fill="#ef3006"/><rect x="273" y="0" width="16" height="18" fill="#7d7d02"/><rect x="289" y="0" width="16" height="18" fill="#ffff00"/><rect x="305" y="0" width="16" height="18" fill="#2a7a05"/><rect x="321" y="0" width="16" height="18" fill="#5cff0a"/><rect x="337" y="0" width="16" height="18" fill="#2e7a7a"/><rect x="353" y="0" width="16" height="18" fill="#70ffff"/><rect x="369" y="0" width="16" height="18" fill="#1a1a80"/><rect x="385" y="0" width="16" height="18" fill="#3636ff"/><rect x="401" y="0" width="16" height="18" fill="#7a1a7a"/><rect x="417" y="0" width="16" height="18" fill="#f040f0"/><rect x="433" y="0" width="16" height="18" fill="#2a0505"/><rect x="449" y="0" width="16" height="18" fill="#4a0a05"/><rect x="465" y="0" width="16" height="18" fill="#7a1505"/><rect x="481" y="0" width="16" height="18" fill="#a01f08"/><rect x="497" y="0" width="16" height="18" fill="#c8260a"/><rect x="513" y="0" width="16" height="18" fill="#ee3006"/><rect x="529" y="0" width="16" height="18" fill="#f03e28"/><rect x="545" y="0" width="16" height="18" fill="#f06050"/><rect x="561" y="0" width="16" height="18" fill="#f08880"/><rect x="577" y="0" width="16" height="18" fill="#f4aaaa"/><rect x="593" y="0" width="16" height="18" fill="#fcd8d8"/><rect x="609" y="0" width="16" height="18" fill="#2a1010"/><rect x="625" y="0" width="16" height="18" fill="#4a1a15"/><rect x="641" y="0" width="16" height="18" fill="#6e2620"/><rect x="657" y="0" width="16" height="18" fill="#9c3a30"/><rect x="673" y="0" width="16" height="18" fill="#b84537"/><rect x="689" y="0" width="16" height="18" fill="#c86058"/><rect x="705" y="0" width="16" height="18" fill="#d48a88"/><rect x="721" y="0" width="16" height="18" fill="#e8b4b0"/></svg>
<div style="position:absolute;left:0px;top:503px;width:735px;height:1px;background:#b0b0b0;opacity:0.7"></div>
<div style="position:absolute;left:0px;top:520px;width:735px;height:1px;background:#b0b0b0;opacity:0.7"></div>
<div style="position:absolute;left:734px;top:503px;width:1px;height:18px;background:#a0a0a0;"></div>
<svg style="position:absolute;left:738px;top:506px;" width="6" height="8" viewBox="0 0 6 8"><path d="M5 0.5 L1 4 L5 7.5" fill="none" stroke="#111" stroke-width="1.7"/></svg>
<div style="position:absolute;left:0px;top:524px;width:735px;height:15px;background:#f6f6f6;border:1px solid #c8c8c8;"></div>
<div style="position:absolute;left:16px;top:525px;width:703px;height:13px;border-radius:7px;background:linear-gradient(#d0d0d0,#eeeeee 35%,#fafafa 60%,#d8d8d8);box-shadow:inset 4px 0 4px -2px rgba(0,0,0,0.22),inset -4px 0 4px -2px rgba(0,0,0,0.22);"></div>
<div style="position:absolute;left:16px;top:525px;width:73px;height:13px;border-radius:6.5px;border:1px solid;border-color:#1c1cc0 #2a2aa0 #3a3a60 #1c1cc0;background:linear-gradient(#8aa4ec 0%,#94acee 35%,#5a86f0 42%,#78acfa 72%,#a4dcff 100%);box-shadow:inset 3px 0 3px -1px #2a3ad8,inset -3px 0 3px -1px #2a3ad8;"></div>
<svg style="position:absolute;left:5px;top:528px;" width="6" height="8" viewBox="0 0 6 8"><path d="M0.5 4 L5.5 1 L5.5 7Z" fill="#444"/></svg>
<svg style="position:absolute;left:724px;top:528px;" width="6" height="8" viewBox="0 0 6 8"><path d="M5.5 4 L0.5 1 L0.5 7Z" fill="#444"/></svg>
<div style="position:absolute;left:0px;top:539px;width:747px;height:27px;background:#f2f2f2;"></div>
<div class="t" style="left:2.2px;top:540.8px;font-size:11.5px;color:#000;font-weight:400;letter-spacing:0.5px">Fill:</div>
<div class="t" style="left:2.2px;top:553.8px;font-size:11.5px;color:#000;font-weight:400;letter-spacing:0.45px">Stroke:</div>
<div class="t" style="left:65px;top:540.8px;font-size:11.5px;color:#000;font-weight:700;letter-spacing:1.05px">Unset</div>
<div class="t" style="left:65px;top:553.8px;font-size:11.5px;color:#000;font-weight:700;letter-spacing:1.05px">Unset</div>
<div class="t" style="left:125.5px;top:546.5px;font-size:11.5px;color:#000;font-weight:400;letter-spacing:0.6px">O:</div>
<div style="position:absolute;left:141px;top:542px;width:36px;height:21px;border:1px solid #9c9c9c;border-radius:3px;background:#fff;overflow:hidden"><div style="position:absolute;right:0;top:0;width:12px;height:100%;background:linear-gradient(90deg,#e8e8e8,#f6f6f6);border-left:1px solid #b4b4b4"></div><svg style="position:absolute;right:0;top:0" width="12" height="19" viewBox="0 0 12 19"><path d="M2.5 6.5 L5.5 3.5 L8.5 6.5" fill="none" stroke="#333" stroke-width="1.1"/><path d="M2.5 12.5 L5.5 15.5 L8.5 12.5" fill="none" stroke="#777" stroke-width="1.1"/><path d="M1 9.5 H12" stroke="#c8c8c8"/></svg></div>
<div class="t" style="left:145.5px;top:546.5px;font-size:11.5px;color:#000;font-weight:400;letter-spacing:0px">0</div>
<div style="position:absolute;left:180px;top:540px;width:1px;height:26px;background:#c4c4c4;"></div>
<svg style="position:absolute;left:185.5px;top:547px;" width="13" height="11" viewBox="0 0 13 11"><path d="M0.7 6.5 Q6.5 0.8 12.3 6.5 Q6.5 10.5 0.7 6.5 Z" fill="#fff" stroke="#111" stroke-width="1.2"/><circle cx="6.5" cy="6.6" r="2.6" fill="#000"/><path d="M6.5 0 V3 M3.2 0.8 L4.2 3.3 M9.8 0.8 L8.8 3.3 M0.6 2.8 L2.3 4.4 M12.4 2.8 L10.7 4.4" stroke="#111" stroke-width="1"/></svg>
<svg style="position:absolute;left:207px;top:547px;" width="11" height="12" viewBox="0 0 11 12"><defs><linearGradient id="lk" x1="0" y1="0" x2="1" y2="1"><stop offset="0" stop-color="#fffbd0"/><stop offset="1" stop-color="#e8d020"/></linearGradient></defs><path d="M3.5 6 V3.5 Q3.5 1 6 1 Q8.5 1 9 3.5 V4.5" fill="none" stroke="#111" stroke-width="1.1"/><path d="M1 5.8 H9.2 L9.6 11.3 H1.3 Z" fill="url(#lk)" stroke="#111" stroke-width="1"/><path d="M5 7.5 L6.3 7.5 L5.9 9.8 L5.3 9.8 Z" fill="#111"/></svg>
<div style="position:absolute;left:223px;top:541px;width:87px;height:23px;border:1px solid #9a9a9a;border-radius:4px;background:linear-gradient(#f8f8f8,#e6e6e6);"></div>
<svg style="position:absolute;left:230.5px;top:549.5px;" width="4" height="4" viewBox="0 0 4 4"><circle cx="2" cy="2" r="1.7" fill="#000"/></svg>
<div class="t" style="left:236.5px;top:546.5px;font-size:11.2px;color:#000;font-weight:700;letter-spacing:0.95px">Layer 1</div>
<div style="position:absolute;left:290px;top:545px;width:1px;height:15px;background:#b4b4b4;"></div>
<svg style="position:absolute;left:295px;top:546px;" width="7" height="13" viewBox="0 0 7 13"><path d="M0.8 4.5 L3.5 1.5 L6.2 4.5 M0.8 8.5 L3.5 11.5 L6.2 8.5" fill="none" stroke="#222" stroke-width="1.2"/></svg>
<div class="t" style="left:316px;top:546px;font-size:13px;color:#000;font-weight:700;letter-spacing:1.35px">Flowed text</div>
<div class="t" style="left:407px;top:546.4px;font-size:12.8px;color:#000;font-weight:400;letter-spacing:0.74px">(19 characters) in layer</div>
<div class="t" style="left:558.5px;top:546px;font-size:13px;color:#000;font-weight:700;letter-spacing:0.2px">La..</div>
<div style="position:absolute;left:583px;top:538px;width:1px;height:28px;background:#c8c8c8;"></div>
<div class="t" style="left:585px;top:540.5px;font-size:12px;color:#000;font-weight:400;">X:</div>
<div class="t" style="left:585px;top:553.5px;font-size:12px;color:#000;font-weight:400;">Y:</div>
<div class="t" style="left:598px;top:540.5px;font-size:12px;color:#000;font-weight:400;letter-spacing:0.75px">1366.90</div>
<div class="t" style="left:605px;top:553.5px;font-size:12px;color:#000;font-weight:400;letter-spacing:0.75px">733.56</div>
<div class="t" style="left:656.5px;top:546.5px;font-size:11.5px;color:#000;font-weight:400;letter-spacing:0.6px">Z:</div>
<div style="position:absolute;left:672px;top:543px;width:55px;height:20px;border:1px solid #9c9c9c;border-radius:3px;background:#fff;overflow:hidden"><div style="position:absolute;right:0;top:0;width:12px;height:100%;background:linear-gradient(90deg,#e8e8e8,#f6f6f6);border-left:1px solid #b4b4b4"></div><svg style="position:absolute;right:0;top:0" width="12" height="18" viewBox="0 0 12 18"><path d="M2.5 6.0 L5.5 3.0 L8.5 6.0" fill="none" stroke="#333" stroke-width="1.1"/><path d="M2.5 12.0 L5.5 15.0 L8.5 12.0" fill="none" stroke="#777" stroke-width="1.1"/><path d="M1 9.0 H12" stroke="#c8c8c8"/></svg></div>
<div class="t" style="left:682.5px;top:546.5px;font-size:11.5px;color:#000;font-weight:400;letter-spacing:0.2px">24%</div>
<svg style="position:absolute;left:735px;top:553px;" width="12" height="13" viewBox="0 0 12 13"><path d="M11 4 L3 12 M11 8 L7 12" stroke="#aaa" stroke-width="1.2"/></svg>
</body></html>
